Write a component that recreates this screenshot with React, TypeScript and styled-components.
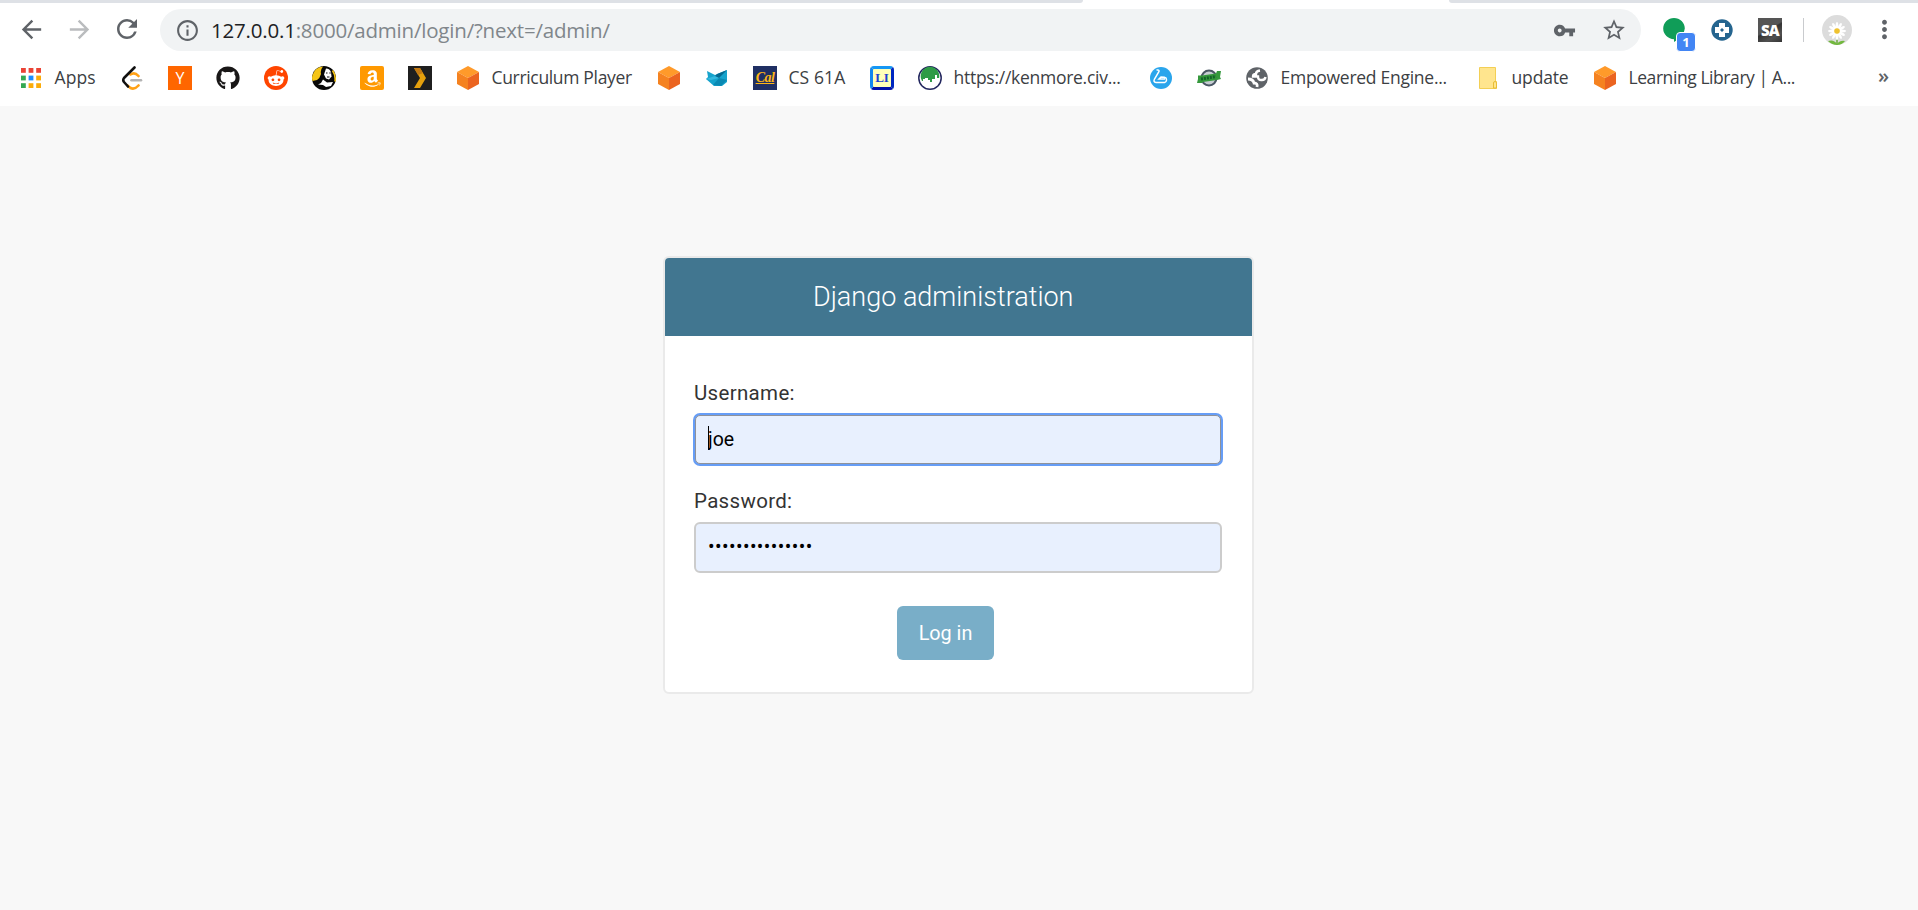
import React from "react";
import styled, { createGlobalStyle } from "styled-components";
import {
  MdArrowBack,
  MdArrowForward,
  MdRefresh,
  MdInfoOutline,
  MdVpnKey,
  MdStarBorder,
  MdMoreVert,
} from "react-icons/md";
import { FaGithub, FaRedditAlien, FaAmazon } from "react-icons/fa";

const GlobalStyle = createGlobalStyle`
  * { box-sizing: border-box; }
  html, body { margin: 0; background: #f8f8f8; }
  body { overflow: hidden; }
`;

const uiFont = `"Open Sans", "Noto Sans", sans-serif`;

const Page = styled.div`
  display: flex;
  flex-direction: column;
  height: 910px;
  background: #f8f8f8;
`;

const Chrome = styled.header`
  height: 106px;
  background: #fff;
  font-family: ${uiFont};
`;

const TabStrip = styled.div`
  display: flex;
  justify-content: space-between;
  height: 3px;
`;

const TabEdge = styled.div<{ $width: number; $side: "left" | "right" }>`
  width: ${(p) => p.$width}px;
  background: #dee1e6;
  border-radius: ${(p) => (p.$side === "left" ? "0 0 6px 0" : "0 0 0 6px")};
`;

const Toolbar = styled.div`
  display: flex;
  align-items: center;
  height: 54px;
  padding: 0 14px 0 16px;
`;

const NavButton = styled.button<{ $muted?: boolean }>`
  display: flex;
  align-items: center;
  justify-content: center;
  width: 30px;
  height: 42px;
  margin-right: 18px;
  padding: 0 0 2px;
  border: 0;
  background: none;
  color: ${(p) => (p.$muted ? "#babcbe" : "#5f6368")};
`;

const AddressBar = styled.div`
  display: flex;
  align-items: center;
  width: 1481px;
  height: 42px;
  padding: 0 14px 0 15px;
  border-radius: 21px;
  background: #f1f3f4;
  color: #5f6368;
`;

const Url = styled.span`
  flex: 1;
  margin-left: 11px;
  font-size: 20.5px;
  line-height: 28px;
  letter-spacing: -0.2px;
  white-space: nowrap;
  color: #80868b;
`;

const Host = styled.span`
  color: #202124;
`;

const BarIcon = styled.span`
  display: flex;
  width: 26px;
  margin-left: 22px;
`;

const Extensions = styled.div`
  display: flex;
  flex: 1;
  align-items: center;
  margin-left: 21px;
`;

const Extension = styled.div`
  position: relative;
  display: flex;
  width: 24px;
  height: 24px;
  margin-right: 24px;
`;

const Badge = styled.span`
  position: absolute;
  left: 14px;
  top: 14px;
  width: 20px;
  height: 20px;
  border: 1px solid #fff;
  border-radius: 4px;
  background: #4285f4;
  color: #fff;
  font: 700 13px/19px ${uiFont};
  text-align: center;
`;

const SaTile = styled.span`
  width: 24px;
  height: 24px;
  background: linear-gradient(150deg, #555 0 45%, #333 50%, #505050 75%, #333);
  color: #fff;
  font: 800 15px/24px ${uiFont};
  letter-spacing: -0.8px;
  text-align: center;
`;

const Separator = styled.span`
  width: 1px;
  height: 24px;
  margin-left: -3px;
  background: #c9cbce;
`;

const Avatar = styled.span`
  display: flex;
  margin-left: 18px;
`;

const MenuDots = styled.span`
  display: flex;
  margin: 0 0 2px 18px;
  color: #5f6368;
`;

const Bookmarks = styled.nav`
  display: flex;
  align-items: center;
  gap: 24px;
  height: 42px;
  padding-left: 19px;
`;

const Bookmark = styled.a`
  display: flex;
  align-items: center;
  gap: 11px;
  height: 24px;
  color: #3c4043;
  text-decoration: none;
`;

const Label = styled.span<{ $width: number; $spacing: number }>`
  width: ${(p) => p.$width + 1}px;
  padding: 0 0 2px 0.5px;
  font-size: 17.5px;
  line-height: 24px;
  letter-spacing: ${(p) => p.$spacing}px;
  white-space: nowrap;
`;

const Tile = styled.span<{ $bg: string; $round?: string }>`
  display: flex;
  align-items: center;
  justify-content: center;
  width: 24px;
  height: 24px;
  border-radius: ${(p) => p.$round ?? "0"};
  background: ${(p) => p.$bg};
  color: #fff;
  font: 400 16px/24px ${uiFont};
`;

const CalTile = styled(Tile)`
  color: #fdb515;
  font: italic 700 14px/22px "Liberation Serif", serif;
  letter-spacing: -0.5px;
  text-decoration: underline;
`;

const LiTile = styled(Tile)`
  border: 3px solid #0038c8;
  border-color: #1597f5 #0028c0 #0010a8 #1187ef;
  color: #1d3fd0;
  font: 700 13px/18px "Liberation Serif", serif;
`;

const Overflow = styled.span`
  margin-left: 54px;
  padding-bottom: 4px;
  color: #5f6368;
  font-size: 20px;
  font-weight: 600;
  line-height: 24px;
`;

const Main = styled.main`
  flex: 1;
  padding-top: 150px;
  font-family: Roboto, sans-serif;
`;

const Card = styled.section`
  width: 591px;
  height: 438px;
  margin-left: 663px;
  border: 2px solid #eaeaea;
  border-radius: 6px;
  background: #fff;
  overflow: hidden;
`;

const CardHeader = styled.h1`
  height: 78px;
  margin: 0;
  padding-left: 148px;
  background: #417690;
  color: #fff;
  font-size: 27px;
  font-weight: 300;
  line-height: 78px;
  white-space: nowrap;
`;

const Form = styled.form`
  display: flex;
  flex-direction: column;
  padding: 44px 30px 0 29px;
`;

const Field = styled.div`
  position: relative;
  display: flex;
  flex-direction: column;
  height: 108px;
`;

const FieldLabel = styled.label`
  height: 34px;
  color: #333;
  font-size: 20.5px;
  line-height: 26px;
  letter-spacing: 0.32px;
`;

const Input = styled.input<{ $focused?: boolean }>`
  height: 51px;
  padding: 0 12px 1px;
  border: 2px solid #ccc;
  border-radius: 6px;
  outline: none;
  background: #e8f0fe;
  color: #000;
  font: 400 19.5px Roboto, sans-serif;
  ${(p) =>
    p.$focused &&
    `
    height: 49px;
    margin: 1px;
    padding: 0 12px 1px;
    border: 1px solid #8f9299;
    border-radius: 5px;
    box-shadow: 0 0 0 2px #669df6;
  `}
  &[type="password"] {
    padding-bottom: 2px;
    letter-spacing: 0.4px;
  }
`;

const Caret = styled.span`
  position: absolute;
  left: 14px;
  top: 46px;
  width: 1px;
  height: 24px;
  background: #000;
`;

const Submit = styled.button`
  width: 97px;
  height: 54px;
  margin: 10px 0 0 203px;
  padding: 0;
  border: 0;
  border-radius: 6px;
  background: #79aec8;
  color: #fff;
  font: 400 19.8px Roboto, sans-serif;
`;

const appColors = ["#ea4335", "#ea4335", "#ea4335", "#34a853", "#1a8cff", "#fbab09", "#34a853", "#fbab09", "#fbab09"];

const AppsIcon = () => (
  <svg width="24" height="24">
    {appColors.map((c, i) => (
      <rect key={i} x={2 + (i % 3) * 7.6} y={2 + Math.floor(i / 3) * 7.6} width="4.8" height="4.8" fill={c} />
    ))}
  </svg>
);

const LeetIcon = () => (
  <svg width="24" height="24" fill="none" strokeWidth="2.6" strokeLinecap="round" strokeLinejoin="round">
    <path d="M10.5 8.5q4-3 8 1.5M7.5 19.5l3 2.5q4 2 8-2.5" stroke="#ffa116" />
    <path d="M14.5 1.5L4 12q-1.500 2 0 4l4 4.500" stroke="#111" />
    <path d="M11.500 14.300H21" stroke="#b3b3b3" />
  </svg>
);

const HandIcon = () => (
  <svg width="24" height="24">
    <circle cx="12" cy="12" r="12" fill="#080808" />
    <path d="M.5 9Q3 1 11 .5 8 4 9 8 8 12 5 14L.5 15Q-.5 12 .5 9Z" fill="#f5c518" />
    <path d="M14 2.500q4 0 5 4l.5 4-2.500 3-3-1-2-4Z" fill="#fff" />
    <path d="M11 13.500l4 3 6-.5-2 4-5 1-3-2-5-.5 3-1.500Z" fill="#fff" />
    <path d="M14 7h1.500M17.300 7h1.500M15 11h2.500" stroke="#111" strokeWidth="1.200" />
    <path d="M20.500 4.500q3.500 5 2.500 11" stroke="#f5c518" strokeWidth="1.600" fill="none" />
  </svg>
);

const PlexIcon = () => (
  <svg width="24" height="24">
    <rect width="24" height="24" fill="#1f1f1f" />
    <path d="M6 2h6l6 10-6 10H6l6-10Z" fill="#e5a00d" />
    <path d="M6 2h6l3 5-5 2Z" fill="#c47a12" />
  </svg>
);

const CubeIcon = () => (
  <svg width="24" height="24">
    <path d="M12 0l11 6-11 6L1 6Z" fill="#ff9a2a" />
    <path d="M1 6l11 6v12L1 18Z" fill="#f58220" />
    <path d="M23 6l-11 6v12l11-6Z" fill="#eb6420" />
  </svg>
);

const FoxIcon = () => (
  <svg width="24" height="24">
    <path d="M2 5l8 4 12-5v12l-5 4H9l-8-7 2-2Z" fill="#16a3cc" />
    <path d="M12 8l10-4-8 8-5-1Z" fill="#056a91" />
    <path d="M8 19l6-7 8 2-6 6Z" fill="#0a89b3" />
    <path d="M1 13l9-3 4 2-8 2Z" fill="#35b9df" />
  </svg>
);

const SkylineIcon = () => (
  <svg width="24" height="24">
    <circle cx="12" cy="12" r="11.200" fill="#fff" stroke="#23275f" strokeWidth="1.500" />
    <path d="M3 12.500A9.300 9.300 0 1 1 21 12.500V12h-2V9h-2v4h-3v3h-2v-2h-2v-2H7v1H5v2H4Z" fill="#2e9b46" />
  </svg>
);

const BikeIcon = () => (
  <svg width="24" height="24" fill="none" stroke="#fff" strokeWidth="1.500">
    <circle cx="12" cy="12" r="11" fill="#2aa5ec" stroke="none" />
    <path d="M7.500 4q3-.5 2.500 1.500L5.500 13q-1.500 3 1.500 3.500h8.500q3-1 1.500-4.500-1-1-5-1l-2 2h6" />
  </svg>
);

const RibbonIcon = () => (
  <svg width="24" height="24">
    <circle cx="12" cy="12" r="7.500" fill="#c6ccd2" stroke="#4a5764" strokeWidth="2" />
    <path d="M1 9.500h4l14-2 1-2.500h4l-1 6 1 2-4 1-14 2-1 1H0l1-4Z" fill="#35983c" />
    <path d="M4 13l15-2.500" stroke="#14632a" strokeWidth="3" strokeDasharray="2 1" />
  </svg>
);

const GlobeIcon = () => (
  <svg width="24" height="24" fill="none" stroke="#fff">
    <circle cx="12" cy="12" r="10.800" fill="#5f6368" stroke="none" />
    <path d="M15 4.500q-4 .5-4 3.500-3 0-3 2.500h5q0 4 4 3.500 3 0 3.500-3" strokeWidth="2.400" />
    <path d="M3 13q5 0 6 4 4 0 3 4" strokeWidth="2.800" />
  </svg>
);

const FolderIcon = () => (
  <svg width="24" height="24">
    <path d="M3.500 1.500h16v14h1v7h-17Z" fill="#ffe58e" stroke="#f3cf55" />
    <path d="M17.500 22v-5q0-1.500 1.500-1.500t1.500 1.500v5Z" fill="#ffe58e" stroke="#e8bd36" />
  </svg>
);

const PlusIcon = () => (
  <svg width="24" height="24">
    <circle cx="12" cy="12" r="10.700" fill="#25658f" />
    <path d="M9 5h6v4h4v6h-4v4H9v-4H5V9h4Z" fill="#fff" />
    <path d="M12 10l2 2-2 2-2-2Z" fill="#25658f" />
  </svg>
);

const BubbleIcon = () => (
  <svg width="24" height="24">
    <path d="M12 0a10.800 10.600 0 1 0 0 21.200V24q10-5 10.800-13.400A10.800 10.600 0 0 0 12 0Z" fill="#109d58" />
  </svg>
);

const DaisyIcon = () => (
  <svg width="30" height="30">
    <circle cx="15" cy="15" r="15" fill="#dcdcdc" />
    <path d="M15 19v11" stroke="#6cab3c" strokeWidth="1.500" />
    <path d="M15 29Q12 24 6 26q4 4 9 4ZM15 29q3-4 8-3-3 4-8 4Z" fill="#72b83e" />
    {Array.from({ length: 12 }, (_, i) => (
      <ellipse key={i} cx="15" cy="10.500" rx="1.300" ry="3.500" fill="#fff" transform={`rotate(${i * 30} 15 16)`} />
    ))}
    <circle cx="15" cy="16" r="2.800" fill="#efc22f" />
  </svg>
);

type BookmarkData = { icon: React.ReactNode; label?: string; width?: number; spacing?: number };

const bookmarks: BookmarkData[] = [
  { icon: <AppsIcon />, label: "Apps", width: 41, spacing: 0.1 },
  { icon: <LeetIcon /> },
  { icon: <Tile $bg="#ff6600">Y</Tile> },
  { icon: <FaGithub size={24} color="#191717" /> },
  { icon: <Tile $bg="#ff4500" $round="50%"><FaRedditAlien size={18} /></Tile> },
  { icon: <HandIcon /> },
  { icon: <Tile $bg="#ff9900" $round="2px"><FaAmazon size={19} /></Tile> },
  { icon: <PlexIcon /> },
  { icon: <CubeIcon />, label: "Curriculum Player", width: 141, spacing: -0.33 },
  { icon: <CubeIcon /> },
  { icon: <FoxIcon /> },
  { icon: <CalTile $bg="#1f2f63">Cal</CalTile>, label: "CS 61A", width: 57, spacing: 0.1 },
  { icon: <LiTile $bg="#ffffb8" $round="4px">LI</LiTile> },
  { icon: <SkylineIcon />, label: "https://kenmore.civ...", width: 171, spacing: -0.27 },
  { icon: <BikeIcon /> },
  { icon: <RibbonIcon /> },
  { icon: <GlobeIcon />, label: "Empowered Engine...", width: 171, spacing: -0.27 },
  { icon: <FolderIcon />, label: "update", width: 57, spacing: -0.15 },
  { icon: <CubeIcon />, label: "Learning Library | A...", width: 171, spacing: -0.43 },
];

export default function App() {
  return (
    <Page>
      <GlobalStyle />
      <Chrome>
        <TabStrip>
          <TabEdge $width={1083} $side="left" />
          <TabEdge $width={469} $side="right" />
        </TabStrip>
        <Toolbar>
          <NavButton><MdArrowBack size={29} /></NavButton>
          <NavButton $muted><MdArrowForward size={29} /></NavButton>
          <NavButton><MdRefresh size={30} /></NavButton>
          <AddressBar>
            <MdInfoOutline size={25} />
            <Url><Host>127.0.0.1</Host>:8000/admin/login/?next=/admin/</Url>
            <BarIcon><MdVpnKey size={23} /></BarIcon>
            <BarIcon><MdStarBorder size={26} /></BarIcon>
          </AddressBar>
          <Extensions>
            <Extension><BubbleIcon /><Badge>1</Badge></Extension>
            <Extension><PlusIcon /></Extension>
            <Extension><SaTile>SA</SaTile></Extension>
            <Separator />
            <Avatar><DaisyIcon /></Avatar>
            <MenuDots><MdMoreVert size={29} /></MenuDots>
          </Extensions>
        </Toolbar>
        <Bookmarks>
          {bookmarks.map((b, i) => (
            <Bookmark key={i}>
              {b.icon}
              {b.label && <Label $width={b.width ?? 0} $spacing={b.spacing ?? 0}>{b.label}</Label>}
            </Bookmark>
          ))}
          <Overflow>»</Overflow>
        </Bookmarks>
      </Chrome>
      <Main>
        <Card>
          <CardHeader>Django administration</CardHeader>
          <Form>
            <Field>
              <FieldLabel>Username:</FieldLabel>
              <Input $focused defaultValue="joe" />
              <Caret />
            </Field>
            <Field>
              <FieldLabel>Password:</FieldLabel>
              <Input type="password" defaultValue="djangoadmin1234" />
            </Field>
            <Submit type="button">Log in</Submit>
          </Form>
        </Card>
      </Main>
    </Page>
  );
}
